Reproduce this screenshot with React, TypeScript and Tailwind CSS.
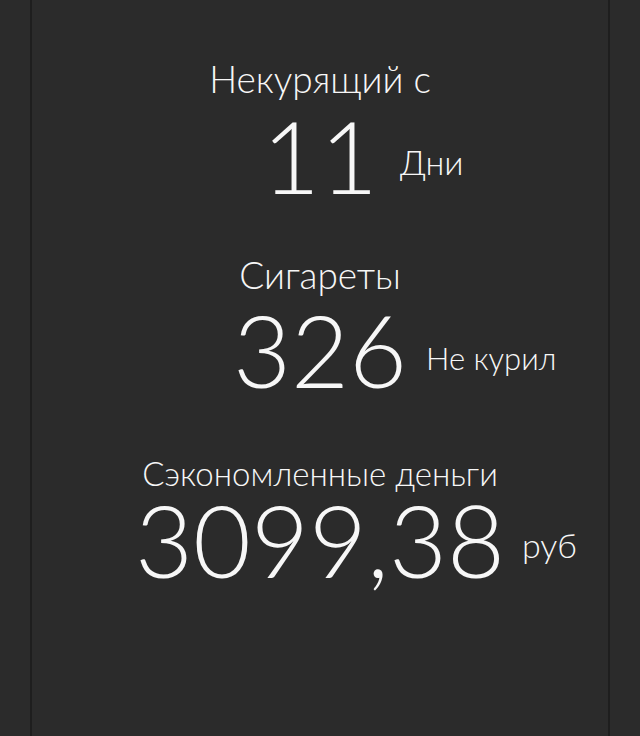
type Stat = {
  label: string;
  value: string;
  unit: string;
  top: string;
  labelSize: string;
  rowShift: string;
  unitSize: string;
  unitPad: string;
};

const stats: Stat[] = [
  {
    label: "Некурящий с",
    value: "11",
    unit: "Дни",
    top: "pt-[51px]",
    labelSize: "text-[37px]",
    rowShift: "mt-[6px]",
    unitSize: "text-[34px]",
    unitPad: "pb-[26px] pl-[22px]",
  },
  {
    label: "Сигареты",
    value: "326",
    unit: "Не курил",
    top: "pt-[50px]",
    labelSize: "text-[37px]",
    rowShift: "mt-[4px]",
    unitSize: "text-[31px]",
    unitPad: "pb-[24px] pl-[19px]",
  },
  {
    label: "Сэкономленные деньги",
    value: "3099,38",
    unit: "руб",
    top: "pt-[54px]",
    labelSize: "text-[33px]",
    rowShift: "-mt-[4px]",
    unitSize: "text-[34px]",
    unitPad: "pb-[27px] pl-[17px]",
  },
];

export default function App() {
  return (
    <div
      className="min-h-[736px] w-full bg-[#2b2b2b] text-[#f7f7f7]"
      style={{ fontFamily: "Lato, 'Noto Sans', sans-serif" }}
    >
      <div className="mx-[30px] min-h-[736px] w-[580px] border-x-2 border-[#1e1e1e]">
        <div className="flex flex-col pt-[8px]">
          {stats.map((s) => (
            <section key={s.label} className={`flex flex-col items-center ${s.top}`}>
              <h2 className={`${s.labelSize} font-light leading-[40px]`}>{s.label}</h2>
              <div className={`grid w-full grid-cols-[1fr_auto_1fr] items-end ${s.rowShift}`}>
                <div />
                <div className="text-[100px] font-light leading-[100px]">{s.value}</div>
                <div className={`${s.unitPad} ${s.unitSize} font-light leading-[34px] whitespace-nowrap`}>
                  {s.unit}
                </div>
              </div>
            </section>
          ))}
        </div>
      </div>
    </div>
  );
}
